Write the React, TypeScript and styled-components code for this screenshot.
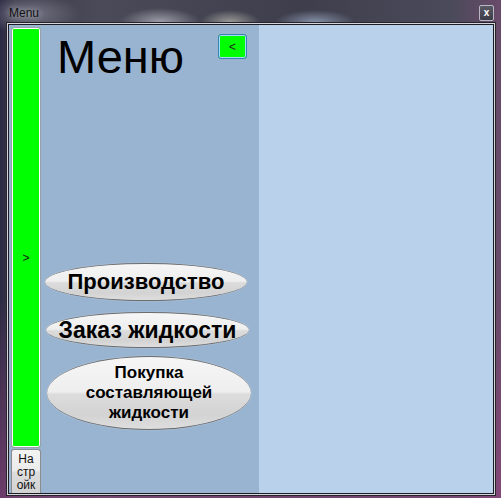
import React from 'react';
import styled, { createGlobalStyle } from 'styled-components';

const Global = createGlobalStyle`
  html, body {
    margin: 0;
    padding: 0;
    background: #2a2a36;
    font-family: "Liberation Sans", Arial, sans-serif;
  }
`;

const Window = styled.div`
  width: 501px;
  height: 498px;
  display: flex;
  flex-direction: column;
  overflow: hidden;
  background:
    radial-gradient(ellipse 40px 14px at 160px 22px, rgba(230, 230, 240, 0.55), transparent),
    radial-gradient(ellipse 30px 12px at 230px 22px, rgba(240, 240, 220, 0.5), transparent),
    radial-gradient(ellipse 40px 12px at 315px 22px, rgba(190, 210, 240, 0.55), transparent),
    radial-gradient(ellipse 50px 20px at 30px 14px, rgba(170, 170, 185, 0.5), transparent),
    linear-gradient(180deg, rgba(0, 0, 0, 0) 60%, rgba(150, 70, 130, 0.6) 100%),
    linear-gradient(90deg, #2c2a44 0%, #3c3c4c 3%, #4a4a58 20%, #3e3e4c 60%, #4a4a5a 90%, #6a4a6a 100%);
`;

const TitleBar = styled.div`
  height: 24px;
  flex: none;
  display: flex;
  align-items: flex-start;
  justify-content: space-between;
  padding: 0 7px 0 9px;
  box-sizing: border-box;
`;

const TitleText = styled.span`
  margin-top: 6px;
  font-size: 12px;
  line-height: 14px;
  color: #111;
  text-shadow: 0 0 6px rgba(220, 220, 230, 0.8);
`;

const CloseButton = styled.div`
  margin-top: 5px;
  width: 15px;
  height: 16px;
  box-sizing: border-box;
  border: 1px solid #b8b8c4;
  border-radius: 2px;
  background: linear-gradient(180deg, #5a5a66, #3c3c48);
  color: #fff;
  font-size: 10px;
  font-weight: bold;
  line-height: 13px;
  text-align: center;
`;

const Client = styled.div`
  margin: 0 7px 0 8px;
  height: 470px;
  flex: none;
  display: flex;
  border: 1px solid #1c1c22;
  box-sizing: border-box;
  box-shadow: 0 0 0 1px #d8d4dc, 0 0 0 2px #26242c;
`;

const LeftPanel = styled.div`
  width: 250px;
  flex: none;
  display: flex;
  padding: 2px 0 0 2px;
  box-sizing: border-box;
  background: #99b4d1;
`;

const Sidebar = styled.div`
  width: 30px;
  display: flex;
  flex-direction: column;
  gap: 1px;
`;

const GreenBar = styled.div`
  height: 421px;
  box-sizing: border-box;
  border: 1px solid #9aa0a8;
  border-radius: 3px;
  box-shadow: inset 0 0 0 1px #ffffff;
  background: #00ff00;
  display: flex;
  justify-content: center;
  padding-top: 223px;
  font-size: 12px;
  line-height: 14px;
  color: #1a1a1a;
`;

const SettingsButton = styled.div`
  flex: 1;
  box-sizing: border-box;
  border: 1px solid #8c8c8c;
  border-bottom: none;
  border-radius: 3px 3px 0 0;
  background: linear-gradient(180deg, #f3f3f3 0%, #ebebeb 48%, #dddddd 52%, #d2d2d2 100%);
  padding-top: 3px;
  font-size: 12px;
  line-height: 13px;
  text-align: center;
  color: #111;
`;

const Content = styled.div`
  flex: 1;
  display: flex;
  flex-direction: column;
`;

const Header = styled.div`
  display: flex;
  justify-content: space-between;
  align-items: flex-start;
  padding: 7px 12px 0 16px;
`;

const Title = styled.h1`
  margin: -1px 0 0 0;
  font-size: 47px;
  line-height: 48px;
  font-weight: normal;
  color: #000;
`;

const ToggleButton = styled.div`
  width: 29px;
  height: 25px;
  box-sizing: border-box;
  border: 1px solid #3c7fb1;
  border-radius: 3px;
  box-shadow: inset 0 0 0 1px #9fdcf8;
  background: #00ff00;
  display: flex;
  align-items: center;
  justify-content: center;
  font-size: 12px;
  color: #222;
`;

const MenuList = styled.div`
  margin-top: 182px;
  display: flex;
  flex-direction: column;
`;

const PillButton = styled.div<{ $offset: number; $w: number; $h: number; $gap: number; $size: number }>`
  margin-left: ${p => p.$offset}px;
  margin-top: ${p => p.$gap}px;
  width: ${p => p.$w}px;
  height: ${p => p.$h}px;
  box-sizing: border-box;
  border-radius: 50%;
  border-top: 1px solid #6c6c6c;
  border-bottom: 1px solid #6c6c6c;
  background: linear-gradient(180deg, #f6f6f6 0%, #eeeeee 48%, #dcdcdc 52%, #d3d3d3 80%, #dedede 100%);
  box-shadow: 0 0 1px rgba(255, 255, 255, 0.8);
  display: flex;
  align-items: center;
  justify-content: center;
  text-align: center;
  font-size: ${p => p.$size}px;
  line-height: 20px;
  font-weight: bold;
  color: #000;
`;

const RightPanel = styled.div`
  flex: 1;
  background: #b9d1ea;
`;

const items = [
  { label: ['Производство'], offset: 4, w: 202, h: 38, gap: 0, size: 22 },
  { label: ['Заказ жидкости'], offset: 5, w: 203, h: 36, gap: 11, size: 23 },
  { label: ['Покупка', 'составляющей', 'жидкости'], offset: 6, w: 204, h: 74, gap: 8, size: 17 },
];

export default function App() {
  return (
    <>
      <Global />
      <Window>
        <TitleBar>
          <TitleText>Menu</TitleText>
          <CloseButton>x</CloseButton>
        </TitleBar>
        <Client>
          <LeftPanel>
            <Sidebar>
              <GreenBar>&gt;</GreenBar>
              <SettingsButton>
                На<br />стр<br />ойк
              </SettingsButton>
            </Sidebar>
            <Content>
              <Header>
                <Title>Меню</Title>
                <ToggleButton>&lt;</ToggleButton>
              </Header>
              <MenuList>
                {items.map(it => (
                  <PillButton key={it.label[0]} $offset={it.offset} $w={it.w} $h={it.h} $gap={it.gap} $size={it.size}>
                    <span>
                      {it.label.map((l, i) => (
                        <React.Fragment key={l}>
                          {i > 0 && <br />}
                          {l}
                        </React.Fragment>
                      ))}
                    </span>
                  </PillButton>
                ))}
              </MenuList>
            </Content>
          </LeftPanel>
          <RightPanel />
        </Client>
      </Window>
    </>
  );
}
